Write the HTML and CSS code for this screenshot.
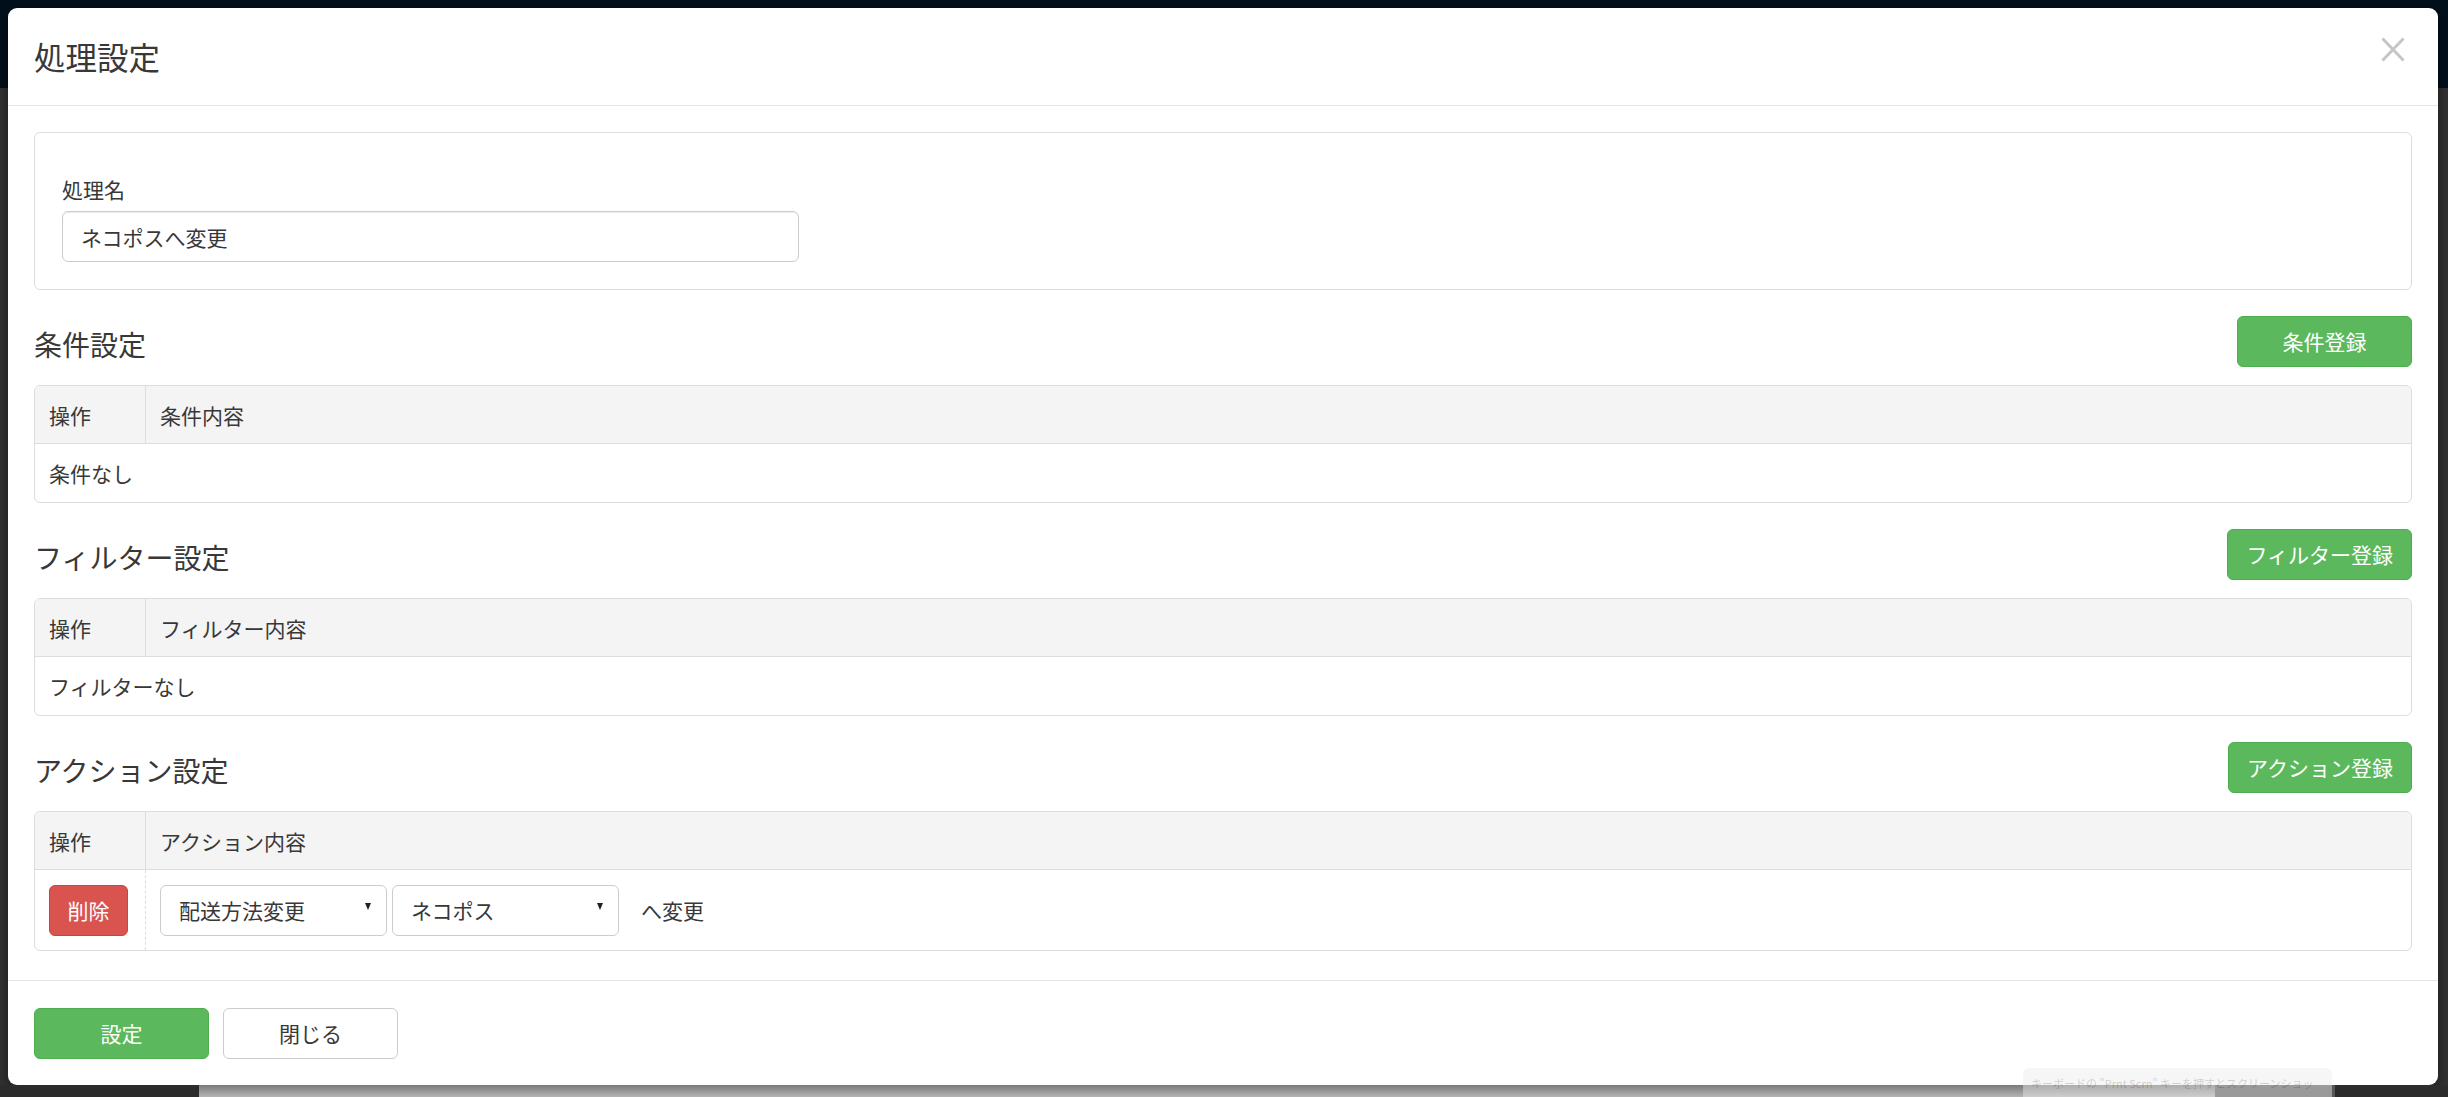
FILE: index.html
```html
<!DOCTYPE html>
<html lang="ja">
<head>
<meta charset="utf-8">
<title>処理設定</title>
<link rel="stylesheet" href="styles.css">
</head>
<body>
<div class="page">
  <div class="modal">
    <div class="modal-header">
      <h4 class="modal-title">処理設定</h4>
      <svg class="close" viewBox="0 0 24 25" aria-label="閉じる">
        <path d="M1.5 1.5 L22.5 23.5 M22.5 1.5 L1.5 23.5" stroke="#c6c6c6" stroke-width="3" fill="none"/>
      </svg>
    </div>
    <div class="modal-body">
      <div class="card">
        <label class="label">処理名</label>
        <input class="input" type="text" value="ネコポスへ変更">
      </div>

      <section class="section">
        <div class="section-head">
          <h4 class="section-title">条件設定</h4>
          <button class="btn btn-green btn-reg">条件登録</button>
        </div>
        <div class="tbl">
          <div class="tr th"><div class="c-op">操作</div><div class="c-main">条件内容</div></div>
          <div class="tr"><div class="c-full">条件なし</div></div>
        </div>
      </section>

      <section class="section">
        <div class="section-head">
          <h4 class="section-title">フィルター設定</h4>
          <button class="btn btn-green btn-reg">フィルター登録</button>
        </div>
        <div class="tbl">
          <div class="tr th"><div class="c-op">操作</div><div class="c-main">フィルター内容</div></div>
          <div class="tr"><div class="c-full">フィルターなし</div></div>
        </div>
      </section>

      <section class="section">
        <div class="section-head">
          <h4 class="section-title">アクション設定</h4>
          <button class="btn btn-green btn-reg">アクション登録</button>
        </div>
        <div class="tbl">
          <div class="tr th"><div class="c-op">操作</div><div class="c-main">アクション内容</div></div>
          <div class="tr action-row">
            <div class="c-op c-op-dashed"><button class="btn btn-red">削除</button></div>
            <div class="c-main">
              <div class="select"><span>配送方法変更</span><span class="caret"></span></div>
              <div class="select"><span>ネコポス</span><span class="caret"></span></div>
              <span class="suffix">へ変更</span>
            </div>
          </div>
        </div>
      </section>
    </div>
    <div class="modal-footer">
      <button class="btn btn-green btn-foot">設定</button>
      <button class="btn btn-default btn-foot">閉じる</button>
    </div>
  </div>
  <div class="strip">
    <div class="seg seg-dark"></div>
    <div class="seg seg-light"></div>
    <div class="seg seg-mid"></div>
    <div class="seg seg-end"></div>
  </div>
  <div class="toast">キーボードの "Prnt Scrn" キーを押すとスクリーンショッ</div>
</div>
</body>
</html>
```

FILE: styles.css
```css
* { box-sizing: border-box; }

html, body { margin: 0; padding: 0; }

body {
  width: 2448px;
  height: 1097px;
  overflow: hidden;
  background: linear-gradient(to bottom, #02101c 0, #02101c 88px, #333 88px, #333 100%);
  font-family: "Noto Sans CJK JP", "Liberation Sans", sans-serif;
  font-size: 21px;
  line-height: 1.42857;
  color: #383838;
}

.page {
  position: relative;
  height: 1097px;
  padding-top: 8px;
}

.modal {
  margin-left: 8px;
  width: 2430px;
  height: 1077px;
  background: #fff;
  border-radius: 9px;
  box-shadow: 0 5px 15px rgba(0, 0, 0, .5);
  display: flex;
  flex-direction: column;
  overflow: hidden;
}

.modal-header {
  flex: none;
  height: 98px;
  border-bottom: 1px solid #e5e5e5;
  display: flex;
  align-items: center;
  justify-content: space-between;
  padding: 0 33px 0 26px;
}

.modal-title {
  margin: 0;
  font-size: 31.5px;
  font-weight: 400;
  line-height: 1.2;
  color: #383838;
}

.close {
  width: 24px;
  height: 25px;
  margin-bottom: 14px;
}

.modal-body {
  flex: 1;
  padding: 26px 26px;
}

.card {
  border: 1px solid #ddd;
  border-radius: 6px;
  padding: 41px 27px 27px;
  margin-bottom: 26px;
}

.label {
  display: block;
  height: 30px;
  margin-bottom: 7px;
}

.input {
  display: block;
  width: 737px;
  height: 51px;
  border: 1px solid #ccc;
  border-radius: 6px;
  padding: 0 18px;
  font: inherit;
  color: #383838;
  background: #fff;
  box-shadow: inset 0 1px 1px rgba(0, 0, 0, .075);
  outline: none;
}

.section + .section { margin-top: 26px; }

.section-head {
  display: flex;
  justify-content: space-between;
  align-items: center;
  height: 51px;
  margin-bottom: 18px;
}

.section-title {
  margin: 0;
  font-size: 28px;
  font-weight: 400;
  line-height: 1.2;
  padding-top: 6px;
}

.btn {
  height: 51px;
  border-radius: 6px;
  font-family: inherit;
  font-size: 21px;
  line-height: 1;
  padding: 0 18px;
  border: 1px solid transparent;
  cursor: pointer;
}

.btn-green {
  background: #5cb85c;
  border-color: #4cae4c;
  color: #fff;
}

.btn-red {
  background: #d9534f;
  border-color: #d43f3a;
  color: #fff;
  width: 79px;
  padding: 0;
}

.btn-default {
  background: #fff;
  border-color: #ccc;
  color: #383838;
}

.btn-reg { min-width: 175px; }

.tbl {
  border: 1px solid #ddd;
  border-radius: 6px;
  overflow: hidden;
}

.tr {
  display: flex;
  min-height: 58px;
}

.th {
  background: #f4f4f4;
  border-bottom: 1px solid #ddd;
}

.c-op {
  width: 111px;
  flex: none;
  border-right: 1px solid #ddd;
  padding-left: 14px;
  display: flex;
  align-items: center;
}

.c-op-dashed { border-right: 1px dashed #ddd; }

.c-main, .c-full {
  flex: 1;
  padding-left: 14px;
  display: flex;
  align-items: center;
}

.action-row { min-height: 80px; }

.select {
  width: 227px;
  height: 51px;
  border: 1px solid #ccc;
  border-radius: 6px;
  padding: 0 15px 0 18px;
  display: flex;
  align-items: center;
  justify-content: space-between;
  background: #fff;
}

.select + .select { margin-left: 5px; }

.caret {
  width: 0;
  height: 0;
  border-left: 3.5px solid transparent;
  border-right: 3.5px solid transparent;
  border-top: 7px solid #222;
  margin-bottom: 8px;
}

.suffix { margin-left: 22px; }

.modal-footer {
  flex: none;
  height: 105px;
  border-top: 1px solid #e5e5e5;
  display: flex;
  align-items: center;
  gap: 14px;
  padding: 0 26px;
}

.btn-foot { width: 175px; }

.strip {
  display: flex;
  height: 12px;
}

.seg-dark { width: 199px; background: #2b2b2b; }
.seg-light { flex: 1; background: linear-gradient(to bottom, #7a7a7a, #b4b4b4); }
.seg-mid { width: 120px; background: #585858; }
.seg-end { width: 113px; background: #2c2c2c; }

.toast {
  position: absolute;
  left: 2023px;
  top: 1068px;
  width: 309px;
  height: 29px;
  padding: 8px 8px 0;
  border-radius: 6px 6px 0 0;
  background: rgba(236, 236, 236, .45);
  font-size: 11px;
  line-height: 1.4;
  color: rgba(0, 0, 0, .18);
  white-space: nowrap;
  overflow: hidden;
}
```
